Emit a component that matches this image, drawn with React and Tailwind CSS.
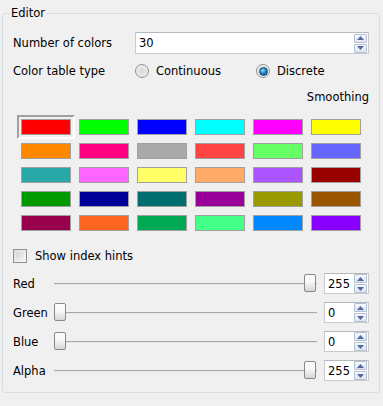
import React from "react";

const swatches = [
  ["#ff0000", "#00ff00", "#0000ff", "#00ffff", "#ff00ff", "#ffff00"],
  ["#ff8800", "#ff0080", "#aaaaaa", "#ff4444", "#66ff66", "#6666ff"],
  ["#29a8a8", "#ff66ff", "#ffff66", "#ffaa66", "#aa55ff", "#990000"],
  ["#009900", "#000099", "#006e6e", "#990099", "#999900", "#995500"],
  ["#99004c", "#ff6622", "#00aa55", "#44ff88", "#0088ff", "#8800ff"],
];

const channels = [
  { name: "Red", value: 255 },
  { name: "Green", value: 0 },
  { name: "Blue", value: 0 },
  { name: "Alpha", value: 255 },
];

// Flecha del spin (arriba / abajo)
const Arrow = ({ up }) => (
  <svg width="7" height="4" viewBox="0 0 7 4">
    <path d={up ? "M0 4 L3.5 0 L7 4 Z" : "M0 0 L3.5 4 L7 0 Z"} fill="#4f67a3" />
  </svg>
);

const SpinButtons = () => (
  <div className="flex flex-col gap-[1px]">
    <div className="w-[13px] h-[9px] border border-[#b3bfd2] rounded-[1px] bg-gradient-to-b from-[#f6f8fb] to-[#dfe5ee] flex items-center justify-center">
      <Arrow up />
    </div>
    <div className="w-[13px] h-[9px] border border-[#b3bfd2] rounded-[1px] bg-gradient-to-b from-[#f6f8fb] to-[#dfe5ee] flex items-center justify-center">
      <Arrow />
    </div>
  </div>
);

const SpinBox = ({ value, className }) => (
  <div
    className={`h-[21px] border border-[#c9cbcf] border-t-[#b5b8bd] bg-white flex items-center pl-[3px] pr-[1px] ${className}`}
  >
    <span className="flex-1">{value}</span>
    <SpinButtons />
  </div>
);

const Radio = ({ checked, label }) => (
  <div className="flex items-center gap-[7px]">
    <div className="w-[14px] h-[14px] rounded-full border border-[#8f9395] bg-[radial-gradient(circle_at_50%_50%,#d8d8d8,#f6f6f6)] flex items-center justify-center">
      {checked && (
        <div className="w-[9px] h-[9px] rounded-full border border-[#1d4a78] bg-[radial-gradient(circle_at_40%_35%,#8fd8ff,#1a7fc0_50%,#0b3f70)]" />
      )}
    </div>
    <span>{label}</span>
  </div>
);

const Slider = ({ value }) => (
  <div className="relative flex-1 h-[21px] flex items-center">
    <div className="w-full h-[2px] border-t border-[#a8a8a8] bg-[#e8e8e8]" />
    <div
      className="absolute top-[1px] w-[12px] h-[18px] rounded-[2px] border border-[#85898c] bg-gradient-to-b from-[#fafafa] from-40% to-[#d6d6d6]"
      style={{ left: `${(value / 255) * 250}px` }}
    />
  </div>
);

export default function App() {
  return (
    <div className="w-[383px] h-[406px] bg-[#f0f0f0] pt-[13px] pl-[2px] text-[11.5px] leading-[14px] text-black font-['DejaVu_Sans',sans-serif]">
      <div className="w-[378px] h-[380px] border border-[#d5dfe5] rounded-[3px] px-[10px]">
        {/* Titulo del grupo */}
        <div className="-mt-[8px] -ml-[3px] flex">
          <span className="bg-[#f0f0f0] px-[1px]">Editor</span>
        </div>

        {/* Numero de colores */}
        <div className="mt-[12px] flex items-center h-[22px]">
          <span className="w-[122px]">Number of colors</span>
          <div className="flex-1 h-[22px] border border-[#c9cbcf] border-t-[#b5b8bd] bg-white flex items-center pl-[3px] pr-[1px]">
            <span className="flex-1">30</span>
            <SpinButtons />
          </div>
        </div>

        {/* Tipo de tabla */}
        <div className="mt-[7px] h-[20px] flex items-center">
          <span className="w-[122px]">Color table type</span>
          <div className="w-[121px]">
            <Radio label="Continuous" />
          </div>
          <Radio checked label="Discrete" />
        </div>

        <div className="mt-[8px] h-[16px] flex items-center justify-end">
          <span>Smoothing</span>
        </div>

        {/* Tabla de colores */}
        <div className="mt-[10px] ml-[4px] grid grid-cols-[repeat(6,58px)] grid-rows-[repeat(5,24px)]">
          {swatches.flat().map((c, i) => (
            <div
              key={i}
              className={`flex items-center justify-center ${
                i === 0
                  ? "border-2 border-t-[#a0a0a0] border-l-[#a0a0a0] border-b-white border-r-white"
                  : ""
              }`}
            >
              <div
                className="w-[50px] h-[16px] border border-[#a0a0a0]"
                style={{ backgroundColor: c }}
              />
            </div>
          ))}
        </div>

        {/* Checkbox */}
        <div className="mt-[12px] h-[18px] flex items-center gap-[8px]">
          <div className="w-[14px] h-[14px] border border-[#8f9395] bg-gradient-to-br from-[#dcdcdc] to-[#f8f8f8] p-[2px]">
            <div className="w-full h-full bg-gradient-to-br from-[#d4d4d4] to-[#f4f4f4]" />
          </div>
          <span>Show index hints</span>
        </div>

        {/* Canales */}
        <div className="mt-[8px] flex flex-col gap-[8px]">
          {channels.map((ch) => (
            <div key={ch.name} className="h-[21px] flex items-center">
              <span className="w-[41px]">{ch.name}</span>
              <Slider value={ch.value} />
              <SpinBox value={ch.value} className="ml-[7px] w-[45px]" />
            </div>
          ))}
        </div>
      </div>
    </div>
  );
}
